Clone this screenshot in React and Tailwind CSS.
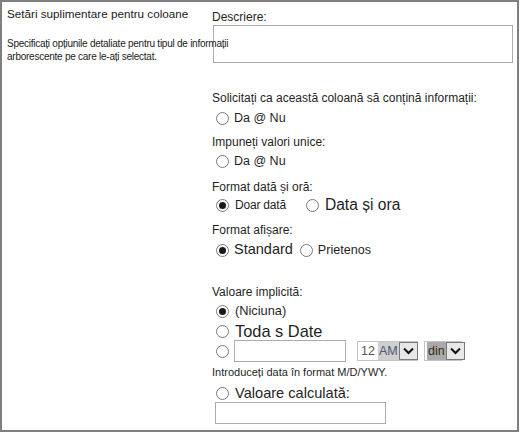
import React from 'react';

const Radio = ({ checked }) => (
  <span className="w-[13px] h-[13px] rounded-full border border-[#7a7a7a] bg-white flex items-center justify-center shrink-0">
    {checked && <span className="w-[7px] h-[7px] rounded-full bg-[#1a1a1a]" />}
  </span>
);

const Arrow = () => (
  <span className="w-[19px] h-[18px] border border-[#7a7a7a] bg-[#e8e8e8] flex items-center justify-center">
    <svg width="11" height="8" viewBox="0 0 11 8">
      <path d="M1 1.5 L5.5 6 L10 1.5" fill="none" stroke="#111" strokeWidth="2" />
    </svg>
  </span>
);

export default function App() {
  return (
    <div
      className="w-[519px] h-[432px] border-2 border-[#7f7f7f] bg-white flex text-[#1f1f1f]"
      style={{ fontFamily: '"Liberation Sans", Arial, sans-serif' }}
    >
      <div className="w-[210px] shrink-0 pl-[5px] relative z-10">
        <div className="mt-[4px] h-[16px] flex items-center text-[11.7px] whitespace-nowrap text-[#222]">
          Setări suplimentare pentru coloane
        </div>
        <p className="mt-[15px] text-[10px] tracking-[-0.25px] leading-[13px] whitespace-nowrap text-[#222]">
          Specificați opțiunile detaliate pentru tipul de informații
          <br />
          arborescente pe care le-ați selectat.
        </p>
      </div>

      <div className="flex-1 flex flex-col text-[12px]">
        <div className="mt-[7px] h-[16px] flex items-center">Descriere:</div>
        <div className="ml-[1px] w-[300px] h-[38px] border border-[#ababab] bg-white" />

        <div className="mt-[27px] h-[16px] flex items-center whitespace-nowrap">
          Solicitați ca această coloană să conțină informații:
        </div>
        <div className="mt-[3px] h-[18px] flex items-center pl-[4px] gap-[5px]">
          <Radio />
          <span className="text-[12.5px]">Da @ Nu</span>
        </div>

        <div className="mt-[7px] h-[16px] flex items-center">Impuneți valori unice:</div>
        <div className="mt-[2px] h-[18px] flex items-center pl-[4px] gap-[5px]">
          <Radio />
          <span className="text-[12.5px]">Da @ Nu</span>
        </div>

        <div className="mt-[9px] h-[16px] flex items-center">Format dată și oră:</div>
        <div className="mt-[1px] h-[18px] flex items-center pl-[4px]">
          <Radio checked />
          <span className="ml-[6px] text-[12px] tracking-[-0.2px]">Doar dată</span>
          <span className="ml-[20px]"><Radio /></span>
          <span className="ml-[6px] text-[15.6px]">Data și ora</span>
        </div>

        <div className="mt-[8px] h-[16px] flex items-center">Format afișare:</div>
        <div className="mt-[3px] h-[18px] flex items-center pl-[4px]">
          <Radio checked />
          <span className="ml-[5px] text-[14.5px]">Standard</span>
          <span className="ml-[7px]"><Radio /></span>
          <span className="ml-[5px] text-[12.6px]">Prietenos</span>
        </div>

        <div className="mt-[25px] h-[16px] flex items-center">Valoare implicită:</div>
        <div className="mt-[2px] h-[18px] flex items-center pl-[4px] gap-[6px]">
          <Radio checked />
          <span className="text-[12.8px]">(Niciuna)</span>
        </div>
        <div className="mt-[3px] h-[17px] flex items-center pl-[4px] gap-[6px]">
          <Radio />
          <span className="text-[16.4px]">Toda s Date</span>
        </div>
        <div className="h-[22px] flex items-center pl-[4px]">
          <Radio />
          <span className="ml-[5px] w-[112px] h-[22px] border border-[#ababab] bg-white" />
          <span className="ml-[11px] w-[61px] h-[20px] border border-[#c4c4c4] bg-white flex items-center text-[12.5px]">
            <span className="pl-[3px] text-[#555]">12</span>
            <span className="ml-[3px] px-[1px] bg-[#cfcfcf] text-[#4a5672]">AM</span>
            <span className="ml-auto"><Arrow /></span>
          </span>
          <span className="ml-[6px] w-[38px] h-[20px] border border-[#c4c4c4] bg-white flex items-center text-[12.5px]">
            <span className="ml-[2px] px-[1px] bg-[#a9a9a9] text-[#3a2a10]">din</span>
            <span className="ml-auto"><Arrow /></span>
          </span>
        </div>
        <div className="mt-[3px] h-[14px] flex items-center text-[11px] whitespace-nowrap">
          Introduceți data în format M/D/YWY.
        </div>
        <div className="mt-[6px] h-[17px] flex items-center pl-[4px] gap-[6px]">
          <Radio />
          <span className="text-[14.6px]">Valoare calculată:</span>
        </div>
        <div className="ml-[3px] w-[171px] h-[22px] border border-[#ababab] bg-white" />
      </div>
    </div>
  );
}
